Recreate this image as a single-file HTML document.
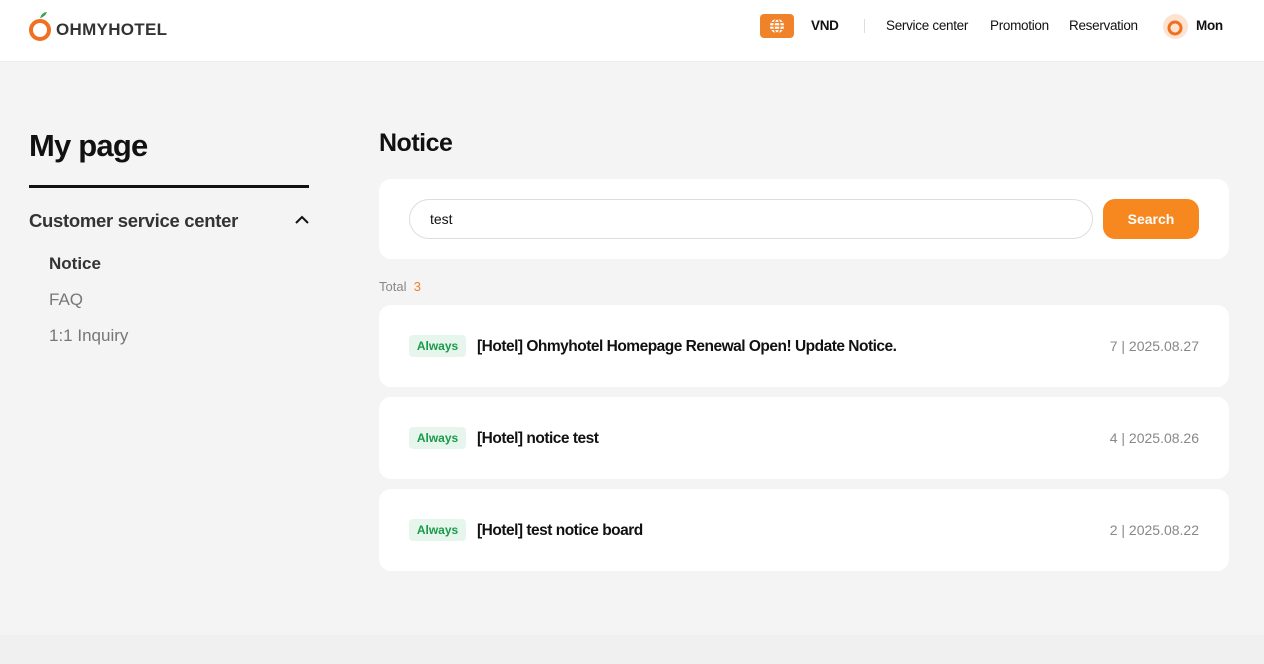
<!DOCTYPE html>
<html><head><meta charset="utf-8"><style>
*{margin:0;padding:0;box-sizing:border-box}
body{width:1264px;height:664px;background:#f4f4f4;font-family:"Liberation Sans",sans-serif;color:#111;position:relative;overflow:hidden}
.hdr{position:absolute;left:0;top:0;width:1264px;height:62px;background:#fff;border-bottom:1px solid #ececec}
.abs{position:absolute;white-space:nowrap}
.nav{font-size:13.5px;color:#111;top:18px;letter-spacing:-0.3px}
.card{position:absolute;left:379px;width:850px;background:#fff;border-radius:12px}
.badge{position:absolute;left:30px;top:30px;width:57px;height:22px;background:#e6f6ec;color:#1a9a4a;font-size:12px;font-weight:bold;border-radius:4px;text-align:center;line-height:22px}
.t{position:absolute;left:98px;top:33px;font-size:15.5px;font-weight:bold;letter-spacing:-0.5px}
.d{position:absolute;right:30px;top:33px;font-size:14px;color:#888}
.foot{position:absolute;left:0;top:635px;width:1264px;height:29px;background:#f0f0f0}
</style></head><body>
<div class="hdr">
 <svg class="abs" style="left:28px;top:9px" width="24" height="34" viewBox="0 0 24 34"><path d="M12 9 Q14 3 19 3 Q17 8 12 9Z" fill="#3aa64a"/><circle cx="12" cy="21" r="9" fill="none" stroke="#f07020" stroke-width="4"/></svg>
 <div class="abs" style="left:56px;top:20px;font-size:17px;font-weight:bold;color:#333;letter-spacing:0.3px">OHMYHOTEL</div>
 <div class="abs" style="left:760px;top:14px;width:34px;height:24px;background:#f0832a;border-radius:4px"><svg width="34" height="24" viewBox="0 0 34 24"><circle cx="17" cy="12" r="7" fill="#fff"/><g stroke="#f0832a" stroke-width="1.3" fill="none"><ellipse cx="17" cy="12" rx="3" ry="7"/><line x1="10" y1="12" x2="24" y2="12"/><line x1="11" y1="8.5" x2="23" y2="8.5"/><line x1="11" y1="15.5" x2="23" y2="15.5"/></g></svg></div>
 <div class="abs nav" style="left:811px;font-weight:bold">VND</div>
 <div class="abs" style="left:864px;top:19px;width:1px;height:14px;background:#ddd"></div>
 <div class="abs nav" style="left:886px">Service center</div>
 <div class="abs nav" style="left:990px">Promotion</div>
 <div class="abs nav" style="left:1069px">Reservation</div>
 <div class="abs" style="left:1163px;top:14px;width:25px;height:25px;border-radius:50%;background:#fde3d2"><svg width="25" height="25"><circle cx="12" cy="14" r="6" fill="none" stroke="#f07020" stroke-width="3"/></svg></div>
 <div class="abs nav" style="left:1196px;font-weight:bold">Mon</div>
</div>
<div class="abs" style="left:29px;top:128px;font-size:31px;font-weight:bold;letter-spacing:-0.8px">My page</div>
<div class="abs" style="left:29px;top:185px;width:280px;height:3px;background:#111"></div>
<div class="abs" style="left:29px;top:210px;font-size:18.5px;font-weight:bold;color:#333;letter-spacing:-0.3px">Customer service center</div>
<svg class="abs" style="left:294px;top:214px" width="16" height="12"><path d="M2 9 L8 3 L14 9" fill="none" stroke="#111" stroke-width="2"/></svg>
<div class="abs" style="left:49px;top:254px;font-size:17px;font-weight:bold;color:#333">Notice</div>
<div class="abs" style="left:49px;top:290px;font-size:17px;color:#777">FAQ</div>
<div class="abs" style="left:49px;top:326px;font-size:17px;color:#777">1:1 Inquiry</div>
<div class="abs" style="left:379px;top:129px;font-size:25px;font-weight:bold;letter-spacing:-0.5px">Notice</div>
<div class="card" style="top:179px;height:80px">
 <div class="abs" style="left:30px;top:20px;width:684px;height:40px;border:1px solid #ddd;border-radius:20px;padding-left:20px;line-height:38px;font-size:14px">test</div>
 <div class="abs" style="left:724px;top:20px;width:96px;height:40px;border-radius:12px;background:#f7871f;color:#fff;font-size:14px;font-weight:bold;text-align:center;line-height:40px">Search</div>
</div>
<div class="abs" style="left:379px;top:279px;font-size:13px;color:#888">Total&nbsp;&nbsp;<span style="color:#f07f2a">3</span></div>
<div class="card" style="top:305px;height:82px"><div class="badge">Always</div><div class="t">[Hotel] Ohmyhotel Homepage Renewal Open! Update Notice.</div><div class="d">7 | 2025.08.27</div></div>
<div class="card" style="top:397px;height:82px"><div class="badge">Always</div><div class="t">[Hotel] notice test</div><div class="d">4 | 2025.08.26</div></div>
<div class="card" style="top:489px;height:82px"><div class="badge">Always</div><div class="t">[Hotel] test notice board</div><div class="d">2 | 2025.08.22</div></div>
<div class="foot"></div>
</body></html>
